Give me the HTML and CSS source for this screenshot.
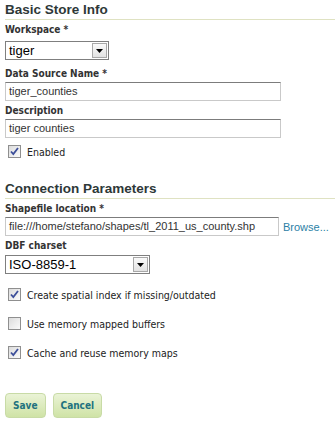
FILE: index.html
```html
<!DOCTYPE html>
<html>
<head>
<meta charset="utf-8">
<link rel="stylesheet" href="styles.css">
</head>
<body>
<form class="page">
  <h2 class="section-title">Basic Store Info</h2>
  <div class="field">
    <label class="field-label">Workspace *</label>
    <div class="select ws-select"><span class="select-value">tiger</span><span class="select-btn"><svg width="7" height="4" viewBox="0 0 7 4"><path d="M0 0h7L3.5 4z" fill="#000"/></svg></span></div>
  </div>
  <div class="field tight">
    <label class="field-label">Data Source Name *</label>
    <div class="text-input wide">tiger_counties</div>
  </div>
  <div class="field tight">
    <label class="field-label">Description</label>
    <div class="text-input wide">tiger counties</div>
  </div>
  <div class="check-row first"><span class="checkbox checked"><svg width="9" height="9" viewBox="0 0 9 9"><path d="M1 4.5l2.3 2.6L8 1" fill="none" stroke="#3d4f9a" stroke-width="1.8"/></svg></span><span class="check-label">Enabled</span></div>

  <h2 class="section-title second">Connection Parameters</h2>
  <div class="field tight">
    <label class="field-label">Shapefile location *</label>
    <div class="file-row"><div class="text-input file">file:///home/stefano/shapes/tl_2011_us_county.shp</div><a class="browse">Browse...</a></div>
  </div>
  <div class="field tight">
    <label class="field-label">DBF charset</label>
    <div class="select cs-select"><span class="select-value">ISO-8859-1</span><span class="select-btn"><svg width="7" height="4" viewBox="0 0 7 4"><path d="M0 0h7L3.5 4z" fill="#000"/></svg></span></div>
  </div>
  <div class="checks">
    <div class="check-row"><span class="checkbox checked"><svg width="9" height="9" viewBox="0 0 9 9"><path d="M1 4.5l2.3 2.6L8 1" fill="none" stroke="#3d4f9a" stroke-width="1.8"/></svg></span><span class="check-label">Create spatial index if missing/outdated</span></div>
    <div class="check-row"><span class="checkbox"></span><span class="check-label">Use memory mapped buffers</span></div>
    <div class="check-row"><span class="checkbox checked"><svg width="9" height="9" viewBox="0 0 9 9"><path d="M1 4.5l2.3 2.6L8 1" fill="none" stroke="#3d4f9a" stroke-width="1.8"/></svg></span><span class="check-label">Cache and reuse memory maps</span></div>
  </div>
  <div class="buttons">
    <button type="button" class="btn">Save</button>
    <button type="button" class="btn">Cancel</button>
  </div>
</form>
</body>
</html>
```
FILE: styles.css
```css
html, body {
  margin: 0;
  padding: 0;
  background: #fff;
}
.page {
  padding: 2px 0 0 5px;
  font-family: "DejaVu Sans Condensed", "DejaVu Sans", sans-serif;
  color: #333;
}
.section-title {
  margin: 0;
  font-family: "Liberation Sans", Arial, sans-serif;
  font-size: 13.5px;
  font-weight: bold;
  color: #2e3838;
  line-height: 16px;
  padding-bottom: 1px;
  border-bottom: 1px solid #dfe2c2;
}
.section-title.second {
  margin-top: 23px;
}
.field {
  display: flex;
  flex-direction: column;
  align-items: flex-start;
  margin-top: 4px;
}
.field-label {
  font-size: 10px;
  font-weight: bold;
  color: #333;
  line-height: 12px;
  margin-bottom: 5px;
}
.field.tight .field-label {
  margin-bottom: 2px;
}
.text-input {
  box-sizing: border-box;
  height: 19px;
  border: 1px solid #c9c9c9;
  border-top-color: #7c7c7c;
  font-family: "Liberation Sans", Arial, sans-serif;
  font-size: 11px;
  color: #333;
  line-height: 17px;
  padding-left: 3px;
  background: #fff;
  white-space: nowrap;
  overflow: hidden;
}
.text-input.wide {
  width: 276px;
}
.text-input.file {
  width: 274px;
}
.file-row {
  display: flex;
  align-items: center;
  gap: 4px;
}
.browse {
  font-family: "Liberation Sans", Arial, sans-serif;
  font-size: 11px;
  color: #2c7fa6;
}
.select {
  box-sizing: border-box;
  height: 19px;
  border: 1px solid #7f7f7f;
  display: flex;
  align-items: center;
  justify-content: space-between;
  font-family: "Liberation Sans", Arial, sans-serif;
  font-size: 13px;
  color: #000;
  padding-left: 3px;
  padding-right: 1px;
}
.ws-select { width: 104px; margin-bottom: 4px; }
.cs-select { width: 145px; margin-top: 1px; }
.select-btn {
  width: 15px;
  height: 15px;
  box-sizing: border-box;
  border: 1px solid #a8a8a8;
  background: linear-gradient(#fafafa, #e2e2e2);
  display: flex;
  align-items: center;
  justify-content: center;
}
.check-row {
  display: flex;
  align-items: center;
  gap: 6px;
  padding-left: 3px;
  height: 13px;
}
.check-row.first {
  margin-top: 7px;
}
.checks {
  margin-top: 14px;
  display: flex;
  flex-direction: column;
  gap: 16px;
}
.checkbox {
  box-sizing: border-box;
  width: 13px;
  height: 13px;
  border: 1px solid #8f8f8f;
  background: linear-gradient(135deg, #dcdcdc, #fbfbfb);
  display: flex;
  align-items: center;
  justify-content: center;
}
.check-label {
  font-size: 10.5px;
  color: #222;
}
.buttons {
  display: flex;
  gap: 7px;
  margin-top: 34px;
}
.btn {
  height: 25px;
  padding: 0 7px;
  border: 1px solid #c8dba6;
  border-radius: 4px;
  background: linear-gradient(#eaf3d6, #cfe3a6);
  font-family: "DejaVu Sans Condensed", "DejaVu Sans", sans-serif;
  font-weight: bold;
  font-size: 10px;
  color: #22727f;
}
```
